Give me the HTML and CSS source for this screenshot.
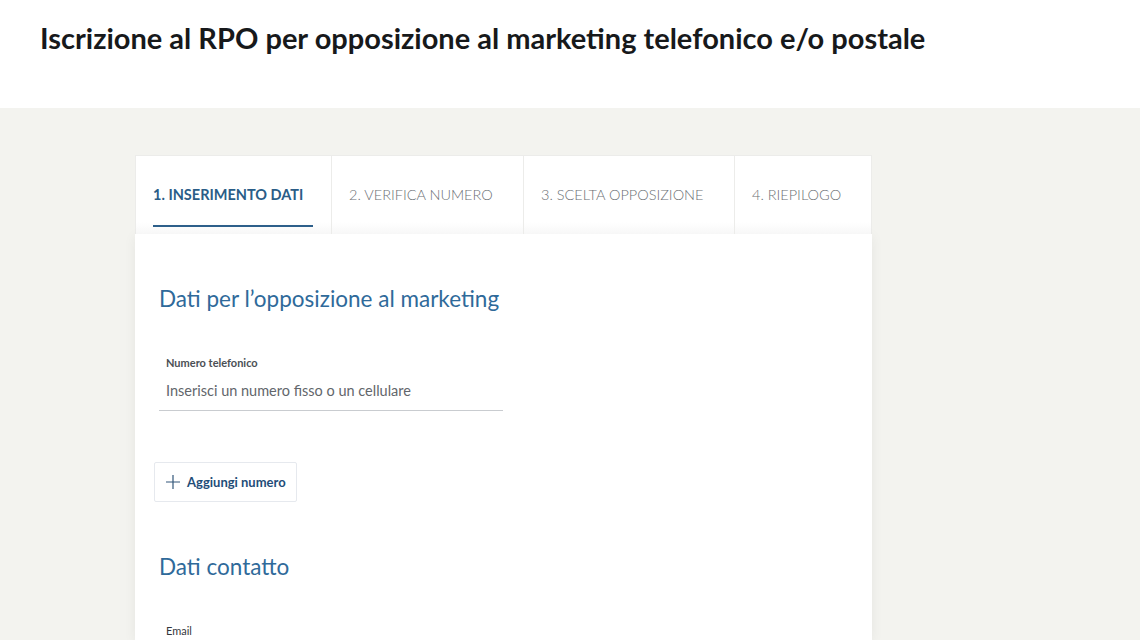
FILE: index.html
```html
<!DOCTYPE html>
<html lang="it">
<head>
<meta charset="utf-8">
<title>Iscrizione al RPO</title>
<link rel="stylesheet" href="styles.css">
</head>
<body>
<header class="page-header">
  <h1 class="page-title">Iscrizione al RPO per opposizione al marketing telefonico e/o postale</h1>
</header>
<main class="page-main">
  <section class="wizard">
    <nav class="steps">
      <div class="step step-active"><span class="step-link">1. INSERIMENTO DATI</span></div>
      <div class="step"><span class="step-link">2. VERIFICA NUMERO</span></div>
      <div class="step"><span class="step-link">3. SCELTA OPPOSIZIONE</span></div>
      <div class="step"><span class="step-link">4. RIEPILOGO</span></div>
    </nav>
    <div class="card">
      <h2 class="section-title">Dati per l’opposizione al marketing</h2>
      <div class="field">
        <label class="field-label">Numero telefonico</label>
        <div class="field-input">Inserisci un numero fisso o un cellulare</div>
      </div>
      <button class="add-btn" type="button">
        <svg class="add-icon" width="16" height="16" viewBox="0 0 16 16"><path d="M8 1v14M1 8h14" stroke="#33577a" stroke-width="1.2" fill="none"/></svg>
        <span>Aggiungi numero</span>
      </button>
      <h2 class="section-title section-title-2">Dati contatto</h2>
      <div class="field">
        <label class="field-label field-label-plain">Email</label>
      </div>
    </div>
  </section>
</main>
</body>
</html>
```
FILE: styles.css
```css
* { box-sizing: border-box; }
html, body { margin: 0; padding: 0; }
body {
  font-family: "Lato", "Open Sans", sans-serif;
  background: #f3f3ef;
  color: #17191b;
  height: 640px;
  overflow: hidden;
}
.page-header {
  background: #ffffff;
  height: 108px;
  padding: 19px 0 0 40px;
}
.page-title {
  margin: 0;
  font-size: 29px;
  font-weight: 700;
  line-height: 38px;
  color: #17191b;
}
.page-main {
  padding: 47px 0 0 135px;
}
.wizard {
  width: 737px;
}
.steps {
  display: grid;
  grid-template-columns: 195px 192px 211px 137px;
  height: 79px;
  background: #ffffff;
  border: 1px solid #ececea;
  border-bottom: none;
}
.step {
  display: flex;
  align-items: flex-start;
  padding: 0 0 0 17px;
  border-left: 1px solid #ececea;
  background: linear-gradient(#ffffff 85%, #f7f7f7);
}
.step:first-child { border-left: none; padding-left: 17px; }
.step-link {
  display: flex;
  align-items: center;
  height: 71px;
  padding: 8px 14px 0 0;
  font-size: 14.5px;
  font-weight: 300;
  color: #6c7075;
  white-space: nowrap;
  border-bottom: 2px solid transparent;
}
.step-active .step-link {
  font-weight: 700;
  color: #2a5d87;
  border-bottom-color: #2d5f8a;
  width: 160px;
}
.card {
  background: #ffffff;
  padding: 50px 24px 20px 24px;
  box-shadow: 0 2px 12px rgba(0,0,0,0.06);
  height: 406px;
}
.section-title {
  margin: 0;
  font-size: 22.5px;
  font-weight: 400;
  color: #2f6a9a;
  line-height: 30px;
}
.field {
  margin-top: 41px;
  width: 344px;
}
.field-label {
  display: block;
  padding-left: 7px;
  font-size: 11px;
  font-weight: 700;
  color: #4b4f55;
  line-height: 16px;
}
.field-label-plain {
  font-weight: 400;
  color: #33373c;
}
.field-input {
  padding: 10px 7px 9px;
  font-size: 14.5px;
  color: #62666b;
  border-bottom: 1px solid #c9ccd0;
  line-height: 20px;
}
.add-btn {
  display: flex;
  align-items: center;
  gap: 6px;
  margin: 51px 0 0 -5px;
  height: 40px;
  padding: 0 10px 0 10px;
  background: #ffffff;
  border: 1px solid #e6e9ee;
  border-radius: 2px;
  font-family: inherit;
  font-size: 13px;
  font-weight: 700;
  color: #1f4d78;
}
.section-title-2 {
  margin-top: 50px;
}
.section-title-2 + .field {
  margin-top: 41px;
}
```
